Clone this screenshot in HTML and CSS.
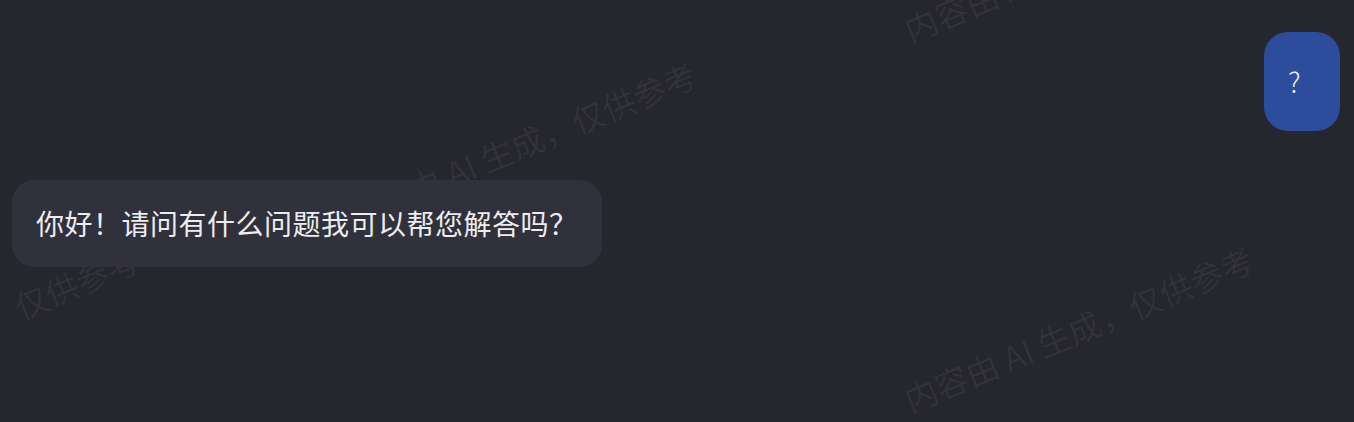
FILE: index.html
```html
<!DOCTYPE html>
<html lang="zh-CN">
<head>
<meta charset="utf-8">
<title>Chat</title>
<link rel="stylesheet" href="styles.css">
</head>
<body>
<div class="page">
  <div class="watermarks" aria-hidden="true">
    <span class="wm wm-a">内容由 AI 生成，仅供参考</span>
    <span class="wm wm-b">内容由 AI 生成，仅供参考</span>
    <span class="wm wm-c">内容由 AI 生成，仅供参考</span>
    <span class="wm wm-d">内容由 AI 生成，仅供参考</span>
  </div>
  <div class="chat">
    <div class="bubble bubble-user">?</div>
    <div class="bubble bubble-bot">你好！请问有什么问题我可以帮您解答吗？</div>
  </div>
</div>
</body>
</html>
```

FILE: styles.css
```css
html, body {
  margin: 0;
  padding: 0;
  background: #26262f;
}
.page {
  position: relative;
  width: 1354px;
  height: 422px;
  overflow: hidden;
  font-family: "Noto Sans CJK SC", "Noto Sans", sans-serif;
}
.watermarks {
  position: absolute;
  inset: 0;
  z-index: 0;
  pointer-events: none;
}
.wm {
  position: absolute;
  white-space: nowrap;
  font-size: 33px;
  line-height: 33px;
  color: rgba(255, 255, 255, 0.06);
  transform-origin: left bottom;
  transform: rotate(-22.5deg);
}
.wm-a { left: 355px; top: 198px; }
.wm-b { left: 912px; top: 383px; }
.wm-c { left: 912px; top: 13px; }
.wm-d { left: -202px; top: 383px; }
.chat {
  position: relative;
  z-index: 1;
  display: flex;
  flex-direction: column;
  gap: 49px;
  padding: 32px 14px 0 12px;
}
.bubble {
  font-size: 28px;
  line-height: 39px;
  color: #ececf1;
}
.bubble-user {
  align-self: flex-end;
  box-sizing: border-box;
  background: #2d4c9b;
  border-radius: 24px;
  padding: 30px 0 30px 24px;
  width: 76px;
  height: 99px;
  font-weight: 300;
}
.bubble-bot {
  align-self: flex-start;
  background: #31313b;
  border-radius: 22px;
  padding: 24px;
  letter-spacing: 0.5px;
}
```
